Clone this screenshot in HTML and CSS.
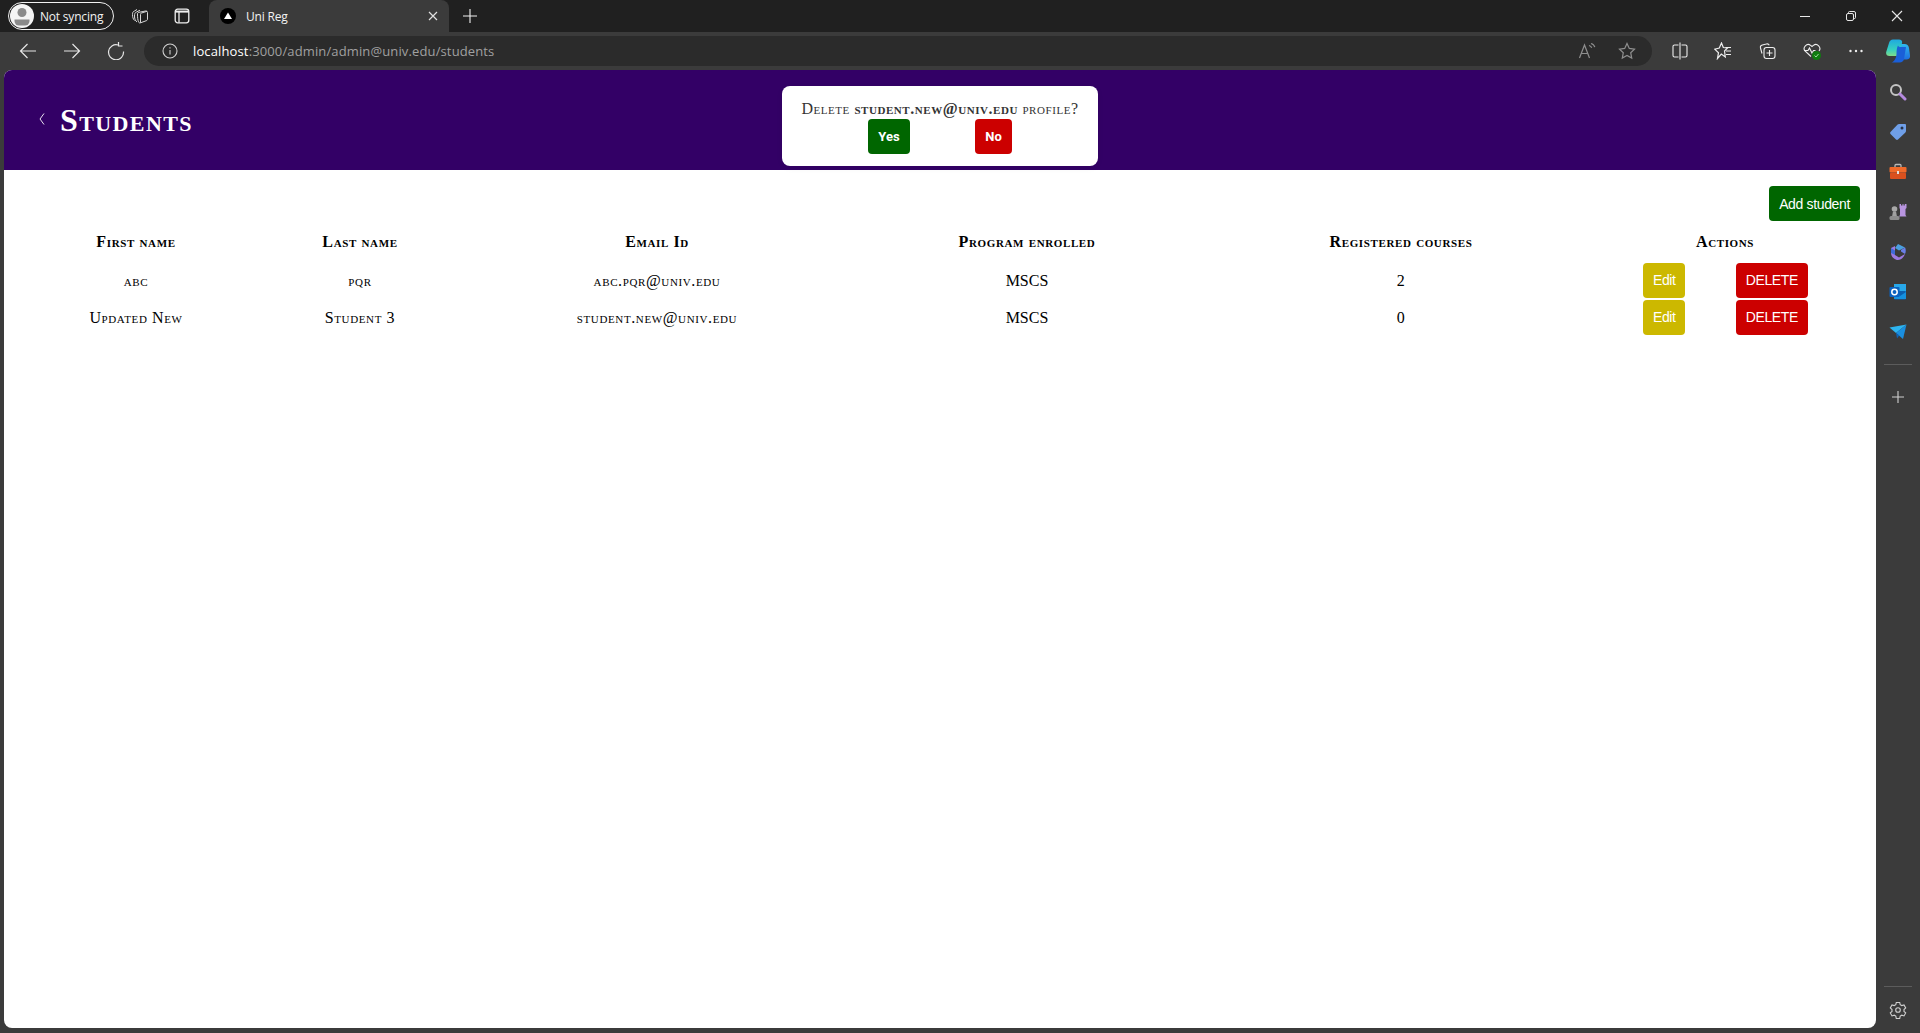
FILE: index.html
```html
<!DOCTYPE html>
<html lang="en">
<head>
<meta charset="utf-8">
<title>Uni Reg</title>
<link rel="stylesheet" href="styles.css">
</head>
<body>
<div class="browser">
  <div class="tabstrip">
    <div class="profile">
      <span class="avatar"><svg width="24" height="24" viewBox="0 0 24 24"><circle cx="12" cy="12" r="12" fill="#f4f4f4"/><circle cx="12" cy="8.5" r="4.5" fill="#8a8a8a"/><path d="M4.5 15.5h15v1.500a4.500 4.500 0 0 1-4.500 4.500H9A4.500 4.500 0 0 1 4.500 17z" fill="#8a8a8a"/></svg></span>
      <span class="profile-label">Not syncing</span>
    </div>
    <span class="strip-icon strip-work"><svg width="18" height="18" viewBox="0 0 18 18" fill="none" stroke="#d8d8d8" stroke-width="1"><path d="M3.500 13.500C2 12 1.500 10 1.500 7.500c0-2 .5-3 2-3.500l2.500-1.500"/><path d="M6 15c-1.500-1-2.500-3-2.500-6 0-2 .5-3.500 2-4L9 3.200"/><path d="M6.500 7c0-1 .5-1.500 1.500-1.700l6.500-1.300c1-.2 2 .3 2 1.500V12c0 1-.5 1.500-1.500 1.800l-5.500 2c-1 .3-1.700 0-2-1C6.700 13 6.500 10 6.500 7z"/><path d="M9.500 15.800V7.500c0-.8.3-1.300 1-1.500l5.500-1.700"/></svg></span>
    <span class="strip-icon strip-tabs"><svg width="16" height="16" viewBox="0 0 16 16" fill="none" stroke="#efefef" stroke-width="1.300"><rect x="1.200" y="1.200" width="13.600" height="13.600" rx="2.500"/><path d="M1.200 3.600h13.600" stroke-width="2"/><path d="M5 4v10.500"/></svg></span>
    <div class="tab">
      <span class="favicon"><svg width="16" height="16" viewBox="0 0 16 16"><circle cx="8" cy="8" r="8" fill="#000"/><path d="M8 4.500 12 11H4z" fill="#fff"/></svg></span>
      <span class="tab-title">Uni Reg</span>
      <svg class="tab-close" width="10" height="10" viewBox="0 0 10 10" stroke="#e0e0e0" stroke-width="1.200"><path d="M1 1l8 8M9 1l-8 8"/></svg>
    </div>
    <svg class="new-tab" width="16" height="16" viewBox="0 0 16 16" stroke="#f0f0f0" stroke-width="1.100"><path d="M8 1v14M1 8h14"/></svg>
    <div class="window-controls">
      <svg width="12" height="12" viewBox="0 0 12 12" stroke="#e8e8e8" stroke-width="1"><path d="M1 6.500h10"/></svg>
      <svg width="12" height="12" viewBox="0 0 12 12" fill="none" stroke="#e8e8e8" stroke-width="1"><rect x="1.500" y="3.500" width="7" height="7" rx="1.500"/><path d="M3.500 3V2.500a1 1 0 0 1 1-1h4.500a1.500 1.500 0 0 1 1.500 1.500v4.500a1 1 0 0 1-1 1H9"/></svg>
      <svg width="12" height="12" viewBox="0 0 12 12" stroke="#e8e8e8" stroke-width="1.100"><path d="M1 1l10 10M11 1 1 11"/></svg>
    </div>
  </div>
  <div class="toolbar">
    <div class="nav-buttons">
      <svg width="18" height="18" viewBox="0 0 18 18" fill="none" stroke="#e6e6e6" stroke-width="1.200"><path d="M17 9H1.500M8.500 2 1.500 9l7 7"/></svg>
      <svg width="18" height="18" viewBox="0 0 18 18" fill="none" stroke="#e6e6e6" stroke-width="1.200"><path d="M1 9h15.500M9.500 2l7 7-7 7"/></svg>
      <svg width="18" height="18" viewBox="0 0 18 18" fill="none" stroke="#e6e6e6" stroke-width="1.200"><path d="M11 3A7.500 7.500 0 1 0 16.500 9.500"/><path d="M11.500 0.500V4.500H15.500" transform="translate(0 -.5)"/></svg>
    </div>
    <div class="address">
      <svg class="info" width="16" height="16" viewBox="0 0 16 16" fill="none" stroke="#d0d0d0" stroke-width="1.100"><circle cx="8" cy="8" r="7"/><path d="M8 7v4.500M8 4.300v1.300"/></svg>
      <span class="url"><span class="url-host">localhost</span>:3000/admin/admin@univ.edu/students</span>
      <div class="address-actions">
        <svg width="18" height="18" viewBox="0 0 18 18" fill="none" stroke="#8f8f8f" stroke-width="1.200"><path d="M1.500 16 6.500 3l5 13M3.300 11.500h6.400M11 3.500c1.500.3 2.300 1 2.700 2.300M13 1.500c2 .5 3.300 1.700 3.800 3.700"/></svg>
        <svg width="18" height="18" viewBox="0 0 18 18" fill="none" stroke="#8f8f8f" stroke-width="1.200"><path d="M9 1.500l2.300 4.900 5.200.7-3.800 3.600 1 5.300L9 13.400 4.300 16l1-5.300L1.500 7.100l5.200-.7z"/></svg>
      </div>
    </div>
    <div class="tools">
      <svg width="16" height="18" viewBox="0 0 16 18" fill="none" stroke="#eee" stroke-width="1.100"><path d="M6.500 3H2.500A1.500 1.500 0 0 0 1 4.500v9A1.500 1.500 0 0 0 2.500 15h4M9.500 3h4A1.500 1.500 0 0 1 15 4.500v9a1.500 1.500 0 0 1-1.500 1.500h-4M8 .5v17"/></svg>
      <svg width="18" height="18" viewBox="0 0 18 18" fill="none" stroke="#eee" stroke-width="1.200"><path d="M7.500 1 9.300 5.500l4.200.5-3 3 .8 6-4-3L3.500 16.500l1-5.800L.7 7.200l4.600-1.200z"/><path d="M11.500 5.500h5.500M12 9h5M12 12.500h5"/></svg>
      <svg width="18" height="18" viewBox="0 0 18 18" fill="none" stroke="#eee" stroke-width="1.100"><path d="M4 11.500 2.500 6a2.500 2.500 0 0 1 1.800-3l4-1a2.500 2.500 0 0 1 3 1.200"/><rect x="6" y="5.500" width="11" height="11" rx="2.500"/><path d="M11.500 8v6M8.500 11h6"/></svg>
      <span class="health"><svg width="20" height="20" viewBox="0 0 20 20" fill="none"><path d="M9 15.500 3 10a4 4 0 0 1 5.600-5.600L10 5.500l1.400-1.100A4 4 0 0 1 17 10M2 9.500h4l1.500-2.500 2.500 5 1.500-2.500h2" stroke="#eee" stroke-width="1.100"/><circle cx="14.500" cy="14.500" r="4.500" fill="#107c10"/><path d="M12.500 14.500l1.500 1.500 2.500-3" stroke="#9fd89f" stroke-width="1"/></svg></span>
      <svg width="16" height="16" viewBox="0 0 16 16" fill="#eee"><circle cx="2.500" cy="8" r="1.200"/><circle cx="8" cy="8" r="1.200"/><circle cx="13.500" cy="8" r="1.200"/></svg>
    </div>
    <svg class="copilot" width="24" height="24" viewBox="0 0 24 24"><defs><linearGradient id="cp1" x1="0" y1="0" x2="0" y2="1"><stop offset="0" stop-color="#2fb8ee"/><stop offset="1" stop-color="#1f6fe0"/></linearGradient><linearGradient id="cp2" x1="0" y1="0" x2="0" y2="1"><stop offset="0" stop-color="#1fa8e0"/><stop offset=".6" stop-color="#35cfc0"/><stop offset="1" stop-color="#7fdc8a"/></linearGradient></defs><path d="M14 5h4.500c2.500 0 4 1.500 4.500 4l1 7.500c.3 2.500-1 4-3.500 4H12z" fill="url(#cp1)"/><path d="M7 .5h6c2.500 0 3.500 1.500 3 3.500L13 17H3.500C1 17-.3 15.500.2 13L3 4C3.600 1.800 5 .5 7 .5z" fill="url(#cp2)"/><path d="M12 6.500c-1 2-1.500 4.500-1.500 8 0 3-1.500 8-5 9h8c2.500 0 4-1.500 4.500-3.500L20 8H15c-1.500 0-2.500-.5-3-1.500z" fill="#1a5fd8"/></svg>
  </div>
  <div class="workspace">
    <main class="page">
      <header class="page-header">
        <svg class="back" width="6" height="12" viewBox="0 0 6 12" fill="none" stroke="#e8e0f0" stroke-width="1"><path d="M5 .5 1 6l4 5.500"/></svg>
        <h1 class="page-title">Students</h1>
      </header>
      <div class="confirm">
        <p class="confirm-text">Delete <strong>student.new@univ.edu</strong> profile?</p>
        <div class="confirm-actions">
          <button class="btn btn-strong btn-green btn-yes">Yes</button>
          <button class="btn btn-strong btn-red btn-no">No</button>
        </div>
      </div>
      <section class="content">
        <div class="action-bar"><button class="btn btn-green">Add student</button></div>
        <table class="students">
          <colgroup>
            <col class="c1"><col class="c2"><col class="c3"><col class="c4"><col class="c5"><col class="c6">
          </colgroup>
          <thead>
            <tr><th>First name</th><th>Last name</th><th>Email Id</th><th>Program enrolled</th><th>Registered courses</th><th>Actions</th></tr>
          </thead>
          <tbody>
            <tr><td>abc</td><td>pqr</td><td>abc.pqr@univ.edu</td><td class="caps">MSCS</td><td>2</td><td><div class="row-actions"><button class="btn btn-yellow">Edit</button><button class="btn btn-red">DELETE</button></div></td></tr>
            <tr><td>Updated New</td><td>Student 3</td><td>student.new@univ.edu</td><td class="caps">MSCS</td><td>0</td><td><div class="row-actions"><button class="btn btn-yellow">Edit</button><button class="btn btn-red">DELETE</button></div></td></tr>
          </tbody>
        </table>
      </section>
    </main>
    <aside class="sidebar">
      <span class="side-item"><svg width="18" height="18" viewBox="0 0 18 18" fill="none"><circle cx="7" cy="7" r="5" stroke="#c4c4c4" stroke-width="2"/><path d="M11 11l5 5" stroke="#b58ae0" stroke-width="3" stroke-linecap="round"/></svg></span>
      <span class="side-item"><svg width="18" height="18" viewBox="0 0 18 18"><path d="M10 1h6a1 1 0 0 1 1 1v6a2 2 0 0 1-.6 1.400L9 16.500a1.500 1.500 0 0 1-2 0L1.500 11a1.500 1.500 0 0 1 0-2L8.600 1.600A2 2 0 0 1 10 1z" fill="#6f9fe8"/><circle cx="13" cy="5" r="1.500" fill="#26324a"/></svg></span>
      <span class="side-item"><svg width="18" height="18" viewBox="0 0 18 18"><path d="M6 4V2.500A1 1 0 0 1 7 1.500h4a1 1 0 0 1 1 1V4" fill="none" stroke="#b8b8b8" stroke-width="1.300"/><rect x="0.500" y="4" width="17" height="5.500" rx="1" fill="#f06a2a"/><rect x="1" y="9.500" width="16" height="6.500" rx="1" fill="#d9501e"/><rect x="8" y="8" width="2" height="3" fill="#e0e0e0"/></svg></span>
      <span class="side-item"><svg width="18" height="18" viewBox="0 0 18 18"><path d="M10.500 1h1.500v1.500h1.500V1h1v1.500h1.300V1H17.500v4l-1 1v6l1 1.500H10l1-1.500V6l-.5-1z" fill="#b895e0"/><circle cx="5.500" cy="6" r="2.800" fill="#a8a8a8"/><path d="M4 8.500h3l1 5H3z" fill="#a0a0a0"/><rect x="0.500" y="13" width="10" height="4" rx="1.500" fill="#8c8c8c"/></svg></span>
      <span class="side-item"><svg width="18" height="18" viewBox="0 0 18 18"><path d="M9 1 16 4.500 10 7.500 6 5z" fill="#4a9fe0"/><path d="M2 5 6 3v9l4 2.500 6-3.500c-1 3-4 6-7 6S2 14 2 10z" fill="#9d7ae0"/><path d="M16 4.500c1 1.200 1 5 0 6.500l-4-2.500V7z" fill="#6a7fe8"/><path d="M2 5l4 2.500V12l-4-2z" fill="#3f6ad8"/></svg></span>
      <span class="side-item"><svg width="18" height="18" viewBox="0 0 18 18"><rect x="5" y="1" width="12" height="8" fill="#28a8ea"/><rect x="5" y="8" width="12" height="8.500" rx="1" fill="#0a5fb0"/><path d="M5 9l6 4 6-4v7H5z" fill="#1490df"/><rect x="0.500" y="4" width="10" height="10" rx="1" fill="#0a62c0"/><circle cx="5.500" cy="9" r="2.700" fill="none" stroke="#fff" stroke-width="1.500"/></svg></span>
      <span class="side-item"><svg width="18" height="18" viewBox="0 0 18 18"><path d="M0.500 4.500 17.500 1.500 7 10z" fill="#2db4ef"/><path d="M17.500 1.500 7 10l7 6z" fill="#1a8fe0"/><path d="M7 10l1 5.500 2.300-3z" fill="#0f63b5"/></svg></span>
      <span class="side-divider side-divider-top"></span>
      <span class="side-item"><svg width="14" height="14" viewBox="0 0 14 14" stroke="#d0d0d0" stroke-width="1.100"><path d="M7 1v12M1 7h12"/></svg></span>
      <span class="side-divider side-divider-bottom"></span>
      <span class="side-item side-gear"><svg width="18" height="18" viewBox="0 0 18 18" fill="none" stroke="#d0d0d0" stroke-width="1.100"><circle cx="9" cy="9" r="2.300"/><path d="M7.300 1.500h3.400l.5 2.200 1.600.9 2.200-.7 1.700 3-1.700 1.600v1.900l1.700 1.500-1.700 3-2.200-.7-1.600.9-.5 2.400H7.300l-.5-2.400-1.600-.9-2.200.7-1.700-3 1.700-1.500V8.500L1.300 6.900l1.700-3 2.200.7 1.600-.9z"/></svg></span>
    </aside>
  </div>
</div>
</body>
</html>
```
FILE: styles.css
```css
* { box-sizing: border-box; }
html, body { margin: 0; height: 100%; }
body { overflow: hidden; background: #3b3b3b; font-family: "Liberation Serif", "Times New Roman", serif; }
svg { display: block; flex: none; }

.browser { display: flex; flex-direction: column; height: 1033px; }

.tabstrip { display: flex; align-items: center; height: 32px; background: #202020; flex: none; font-family: "Open Sans", "Noto Sans", sans-serif; color: #f2f2f2; }
.profile { display: flex; align-items: center; gap: 6px; width: 106px; height: 28px; margin-left: 8px; padding-left: 1px; border: 1px solid #f0f0f0; border-radius: 14px; }
.avatar { display: block; width: 24px; height: 24px; }
.profile-label { font-size: 12px; letter-spacing: -0.2px; white-space: nowrap; }
.strip-icon { display: block; }
.strip-work { margin-left: 17px; }
.strip-tabs { margin-left: 25px; }
.tab { display: flex; align-items: center; width: 240px; height: 32px; margin-left: 19px; padding-left: 11px; background: #3b3b3b; border-radius: 8px 8px 0 0; align-self: flex-end; position: relative; }
.tab-title { margin-left: 10px; font-size: 12px; letter-spacing: -0.2px; }
.tab-close { margin-left: auto; margin-right: 11px; }
.new-tab { margin-left: 13px; }
.window-controls { display: flex; align-items: center; gap: 34px; margin-left: auto; margin-right: 17px; }

.toolbar { display: flex; align-items: center; height: 38px; background: #3b3b3b; flex: none; }
.nav-buttons { display: flex; align-items: center; gap: 26px; margin-left: 19px; }
.address { display: flex; align-items: center; width: 1508px; height: 30px; margin-left: 19px; padding-left: 18px; border-radius: 15px; background: #2b2b2b; font-family: "Open Sans", "Noto Sans", sans-serif; }
.info { margin-right: 15px; }
.url { font-size: 13px; color: #a0a0a0; letter-spacing: 0.13px; white-space: nowrap; }
.url-host { color: #fff; }
.address-actions { display: flex; align-items: center; gap: 22px; margin-left: auto; margin-right: 16px; }
.tools { display: flex; align-items: center; gap: 26px; margin-left: 20px; }
.health { display: block; }
.copilot { margin-left: 22px; }

.workspace { display: flex; flex: 1; min-height: 0; padding-left: 4px; }
.page { position: relative; flex: 1; min-width: 0; margin-bottom: 5px; background: #fff; border-radius: 8px; overflow: hidden; }
.page-header { display: flex; align-items: center; height: 100px; padding-left: 35px; background: #330066; color: #fff; }
.back { margin-top: -3px; margin-right: 15px; }
.page-title { margin: 0; font-size: 32px; font-weight: 700; font-variant: small-caps; letter-spacing: 1.4px; }

.confirm { position: absolute; top: 16px; left: 778px; width: 316px; height: 80px; padding-top: 13px; background: #fff; border-radius: 8px; text-align: center; box-shadow: 0 2px 6px rgba(0,0,0,.06); }
.confirm-text { margin: 0; font-size: 16px; line-height: 19px; font-variant: small-caps; letter-spacing: 0.55px; color: #333; }
.confirm-actions { display: flex; margin-top: 1px; padding-left: 86px; }

.btn { height: 35px; padding: 0 10px; border: 0; border-radius: 4px; color: #fff; font-family: "Liberation Sans", Arial, sans-serif; font-size: 14px; letter-spacing: -0.35px; }
.btn-strong { padding: 0; font-size: 13px; font-weight: 700; letter-spacing: 0; font-family: "Roboto", "Liberation Sans", sans-serif; }
.btn-green { background: #006600; }
.btn-red { background: #cc0000; }
.btn-yellow { background: #ccb800; }
.btn-yes { width: 42px; }
.btn-no { width: 37px; margin-left: 65px; }

.content { padding: 16px 16px 0; }
.action-bar { display: flex; justify-content: flex-end; }
.students { width: 1836px; table-layout: fixed; border-collapse: collapse; font-variant: small-caps; font-size: 16px; color: #000; }
.students th { height: 41px; padding: 1px; font-weight: 700; text-align: center; letter-spacing: 0.62px; }
.students td { height: 37px; padding: 1px; text-align: center; letter-spacing: 0.62px; }
.students td.caps { letter-spacing: 0; }
.c1 { width: 232px; }
.c2 { width: 216px; }
.c3 { width: 378px; }
.c4 { width: 362px; }
.c5 { width: 386px; }
.c6 { width: 262px; }
.row-actions { display: flex; justify-content: center; gap: 51px; padding-left: 1px; font-variant: normal; }
.row-actions .btn { padding: 0 9.5px 2px; }

.sidebar { display: flex; flex-direction: column; align-items: center; width: 44px; flex: none; padding-top: 2px; }
.side-item { display: flex; align-items: center; justify-content: center; width: 44px; height: 40px; flex: none; }
.side-divider { display: block; width: 28px; height: 1px; background: #5c5c5c; flex: none; }
.side-divider-top { margin: 12px 0; }
.side-divider-bottom { margin-top: auto; margin-bottom: 3px; }
.side-gear { margin-bottom: 3px; }
```
